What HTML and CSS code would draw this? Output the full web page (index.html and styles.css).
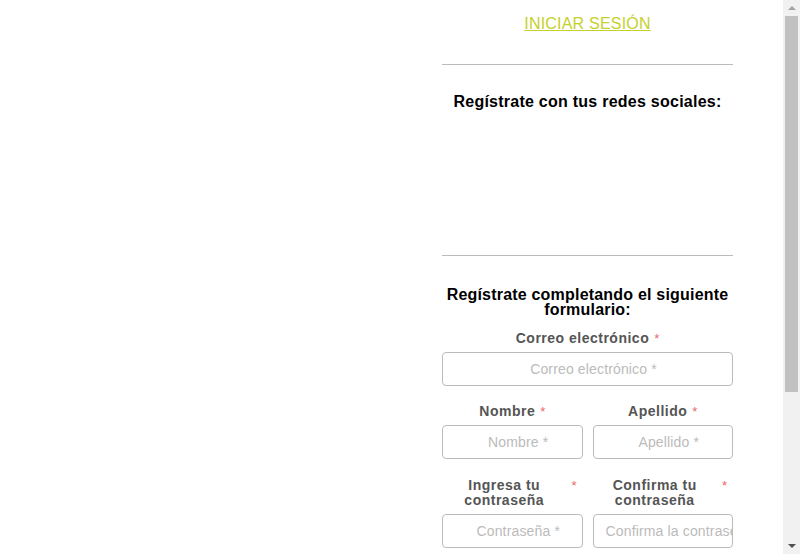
FILE: index.html
```html
<!DOCTYPE html>
<html lang="es">
<head>
<meta charset="utf-8">
<title>Registro</title>
<link rel="stylesheet" href="styles.css">
</head>
<body>
<div class="page">
  <div class="left"></div>
  <div class="right">
    <div class="login"><a href="#" class="login-link">INICIAR SESIÓN</a></div>
    <div class="rule rule-top"></div>
    <h2 class="social-title">Regístrate con tus redes sociales:</h2>
    <div class="social-area"></div>
    <div class="rule"></div>
    <h2 class="form-title">Regístrate completando el siguiente formulario:</h2>
    <form class="form">
      <div class="field">
        <label class="label"><span class="label-text">Correo electrónico</span><span class="req">*</span></label>
        <input class="input" type="email" placeholder="Correo electrónico *">
      </div>
      <div class="row">
        <div class="field">
          <label class="label"><span class="label-text">Nombre</span><span class="req">*</span></label>
          <input class="input" type="text" placeholder="Nombre *">
        </div>
        <div class="field">
          <label class="label"><span class="label-text">Apellido</span><span class="req">*</span></label>
          <input class="input" type="text" placeholder="Apellido *">
        </div>
      </div>
      <div class="row">
        <div class="field">
          <label class="label label-wrap"><span class="label-text">Ingresa tu contraseña</span><span class="req">*</span></label>
          <input class="input" type="password" placeholder="Contraseña *">
        </div>
        <div class="field">
          <label class="label label-wrap"><span class="label-text">Confirma tu contraseña</span><span class="req">*</span></label>
          <input class="input" type="password" placeholder="Confirma la contraseña *">
        </div>
      </div>
      <div class="field terms">
        <label class="check"><input type="checkbox"> Acepto los términos y condiciones</label>
      </div>
      <button class="submit" type="button">REGISTRARME</button>
    </form>
  </div>
</div>
<div class="scrollbar" aria-hidden="true">
  <div class="sb-btn"><span class="arrow-up"></span></div>
  <div class="sb-track">
    <div class="sb-thumb"></div>
  </div>
  <div class="sb-btn"><span class="arrow-down"></span></div>
</div>
</body>
</html>
```

FILE: styles.css
```css
html, body {
  margin: 0;
  padding: 0;
  background: #fff;
}
body {
  font-family: "Liberation Sans", Arial, sans-serif;
}
.page {
  display: flex;
  min-height: 765px;
  margin-right: 17px;
}
.left {
  flex: 1;
}
.right {
  width: 291px;
  margin-right: 50px;
  padding-top: 15px;
  padding-bottom: 40px;
}
.login {
  text-align: center;
  font-size: 16px;
  line-height: 18px;
  letter-spacing: 0.2px;
}
.login-link {
  color: #c4d12a;
  text-decoration: underline;
}
.rule {
  height: 1px;
  background: #bbbbbb;
}
.rule-top {
  margin-top: 31px;
}
.social-title {
  margin: 28px 0 0;
  font-size: 16px;
  line-height: 18px;
  font-weight: bold;
  letter-spacing: 0.25px;
  text-align: center;
  color: #000;
}
.social-area {
  height: 144px;
}
.form-title {
  margin: 31px 0 0;
  font-size: 16px;
  line-height: 15px;
  font-weight: bold;
  letter-spacing: 0.2px;
  text-align: center;
  color: #000;
}
.form {
  margin-top: 14px;
}
.row {
  display: grid;
  grid-template-columns: 1fr 1fr;
  gap: 10px;
}
.field {
  margin-bottom: 18px;
}
.label {
  display: flex;
  justify-content: center;
  align-items: flex-start;
  gap: 5px;
  font-size: 14px;
  line-height: 15px;
  font-weight: bold;
  letter-spacing: 0.5px;
  color: #555;
  margin-bottom: 6px;
}
.label-wrap {
  margin-top: 1px;
  margin-bottom: 6px;
  padding-right: 6px;
}
.label-wrap .label-text {
  text-align: center;
}
.req {
  color: #e66a6a;
  font-weight: normal;
  font-size: 13px;
  letter-spacing: 0;
}
.input {
  display: block;
  box-sizing: border-box;
  width: 100%;
  height: 34px;
  border: 1px solid #bbbbbb;
  border-radius: 4px;
  padding: 0 0 0 12px;
  font-family: "Liberation Sans", Arial, sans-serif;
  font-size: 14px;
  letter-spacing: 0.15px;
  text-align: center;
  color: #333;
  background: #fff;
  outline: none;
}
.input::placeholder {
  color: #bbbbbb;
}
.terms {
  text-align: center;
  font-size: 13px;
  color: #555;
}
.submit {
  display: block;
  width: 100%;
  height: 38px;
  border: 0;
  border-radius: 4px;
  background: #c4d12a;
  color: #fff;
  font-weight: bold;
  font-size: 14px;
}

/* classic window scrollbar */
.scrollbar {
  position: fixed;
  top: 0;
  right: 0;
  width: 17px;
  height: 100vh;
  background: #f1f1f1;
  display: flex;
  flex-direction: column;
}
.sb-btn {
  height: 16px;
  flex: none;
  display: flex;
  align-items: center;
  justify-content: center;
}
.sb-track {
  flex: 1;
  padding: 0 2px;
}
.sb-thumb {
  height: 376px;
  background: #c1c1c1;
}
.arrow-up {
  width: 0;
  height: 0;
  border-left: 4px solid transparent;
  border-right: 4px solid transparent;
  border-bottom: 4px solid #a3a3a3;
}
.arrow-down {
  width: 0;
  height: 0;
  border-left: 4px solid transparent;
  border-right: 4px solid transparent;
  border-top: 4px solid #505050;
}
```
